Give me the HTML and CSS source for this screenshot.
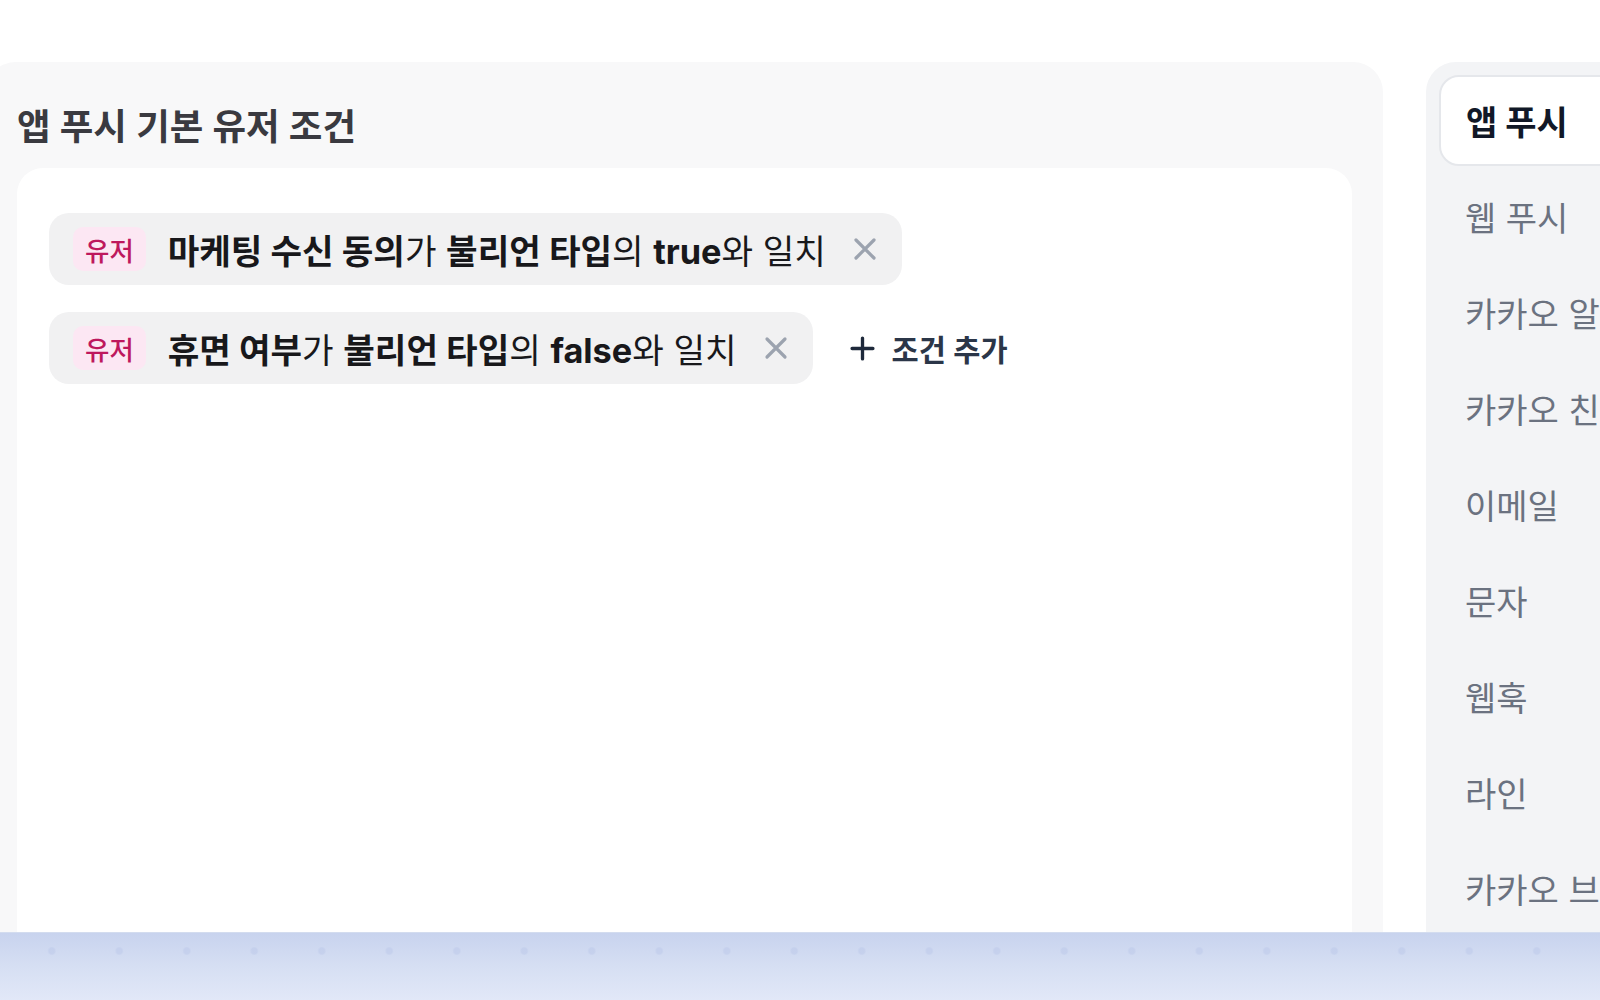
FILE: index.html
```html
<!DOCTYPE html>
<html lang="ko">
<head>
<meta charset="utf-8">
<title>앱 푸시 기본 유저 조건</title>
<link rel="stylesheet" href="styles.css">
</head>
<body>
<div class="page">
  <section class="main-panel">
    <h2 class="title">앱 푸시 기본 유저 조건</h2>
    <div class="card">
      <div class="row">
        <div class="chip">
          <span class="badge">유저</span>
          <span class="cond"><b>마케팅 수신 동의</b>가 <b>불리언 타입</b>의 <b>true</b>와 일치</span>
          <svg class="x" viewBox="0 0 24 24" width="24" height="24"><path d="M3 3 L21 21 M21 3 L3 21" stroke="#9ca3af" stroke-width="3.2" stroke-linecap="round" fill="none"/></svg>
        </div>
      </div>
      <div class="row">
        <div class="chip">
          <span class="badge">유저</span>
          <span class="cond"><b>휴면 여부</b>가 <b>불리언 타입</b>의 <b>false</b>와 일치</span>
          <svg class="x" viewBox="0 0 24 24" width="24" height="24"><path d="M3 3 L21 21 M21 3 L3 21" stroke="#9ca3af" stroke-width="3.2" stroke-linecap="round" fill="none"/></svg>
        </div>
        <button class="add">
          <svg viewBox="0 0 24 24" width="25" height="25"><path d="M12 2 V22 M2 12 H22" stroke="#1e293b" stroke-width="3.2" stroke-linecap="round" fill="none"/></svg>
          <span>조건 추가</span>
        </button>
      </div>
    </div>
  </section>
  <nav class="side">
    <div class="tab active">앱 푸시</div>
    <div class="tab">웹 푸시</div>
    <div class="tab">카카오 알림톡</div>
    <div class="tab">카카오 친구톡</div>
    <div class="tab">이메일</div>
    <div class="tab">문자</div>
    <div class="tab">웹훅</div>
    <div class="tab">라인</div>
    <div class="tab">카카오 브랜드 메시지</div>
  </nav>
</div>
<div class="fade"></div>
</body>
</html>
```
FILE: styles.css
```css
html, body {
  margin: 0;
  padding: 0;
  width: 1600px;
  height: 1000px;
  overflow: hidden;
  background: #ffffff;
  font-family: "Inter", "Noto Sans CJK KR", sans-serif;
}

.page {
  display: flex;
  align-items: flex-start;
  padding-top: 62px;
  width: 1600px;
  height: 1000px;
  overflow: hidden;
  box-sizing: border-box;
}

.main-panel {
  flex: none;
  margin-left: -14px;
  width: 1397px;
  height: 960px;
  box-sizing: border-box;
  padding: 0 31px 0 31px;
  background: #f8f8f9;
  border-radius: 30px;
}

.title {
  margin: 0;
  padding: 42px 0 18px;
  font-size: 36.5px;
  line-height: 46px;
  font-weight: 600;
  color: #3a3a40;
}

.card {
  background: #ffffff;
  border-radius: 26px;
  height: 860px;
  box-sizing: border-box;
  padding: 45px 32px;
  display: flex;
  flex-direction: column;
  align-items: flex-start;
  gap: 27px;
}

.row {
  display: flex;
  align-items: center;
  gap: 37px;
}

.chip {
  display: flex;
  align-items: center;
  height: 72px;
  box-sizing: border-box;
  padding: 0 25px 0 24px;
  background: #f1f1f2;
  border-radius: 20px;
}

.badge {
  display: flex;
  align-items: center;
  height: 44px;
  padding: 0 12px;
  background: #fce7f3;
  color: #be185d;
  border-radius: 10px;
  font-size: 26.5px;
  font-weight: 500;
}

.cond {
  margin-left: 22px;
  font-size: 34.3px;
  color: #18181b;
  white-space: nowrap;
}

.cond b {
  font-weight: 700;
}

.x {
  margin-left: 27px;
  flex: none;
}

.add {
  display: flex;
  align-items: center;
  gap: 17px;
  border: 0;
  padding: 0;
  background: none;
  font-family: inherit;
  font-size: 29.5px;
  font-weight: 600;
  color: #2b3648;
}

.side {
  flex: none;
  margin-left: 43px;
  width: 400px;
  height: 960px;
  box-sizing: border-box;
  padding: 13px 0 0 13px;
  background: #f3f4f6;
  border-radius: 30px;
  display: flex;
  flex-direction: column;
}

.tab {
  height: 96px;
  display: flex;
  align-items: center;
  padding-left: 26px;
  font-size: 34px;
  color: #6b7280;
  white-space: nowrap;
}

.tab.active {
  height: 91px;
  box-sizing: border-box;
  padding-left: 25px;
  margin-bottom: 2px;
  background: #ffffff;
  border: 2px solid #e5e7eb;
  border-radius: 20px;
  color: #111827;
  font-weight: 700;
}

.fade {
  position: absolute;
  left: 0;
  top: 932px;
  width: 1600px;
  height: 68px;
  border-top: 1px solid #d3dcef;
  background:
    radial-gradient(circle, rgba(176, 190, 228, 0.32) 0 3px, transparent 4.5px) 18px 1px / 67.5px 34px repeat-x,
    linear-gradient(180deg, #c8d3ee 0%, #d6dff3 50%, #e2e8f8 100%);
}
```
